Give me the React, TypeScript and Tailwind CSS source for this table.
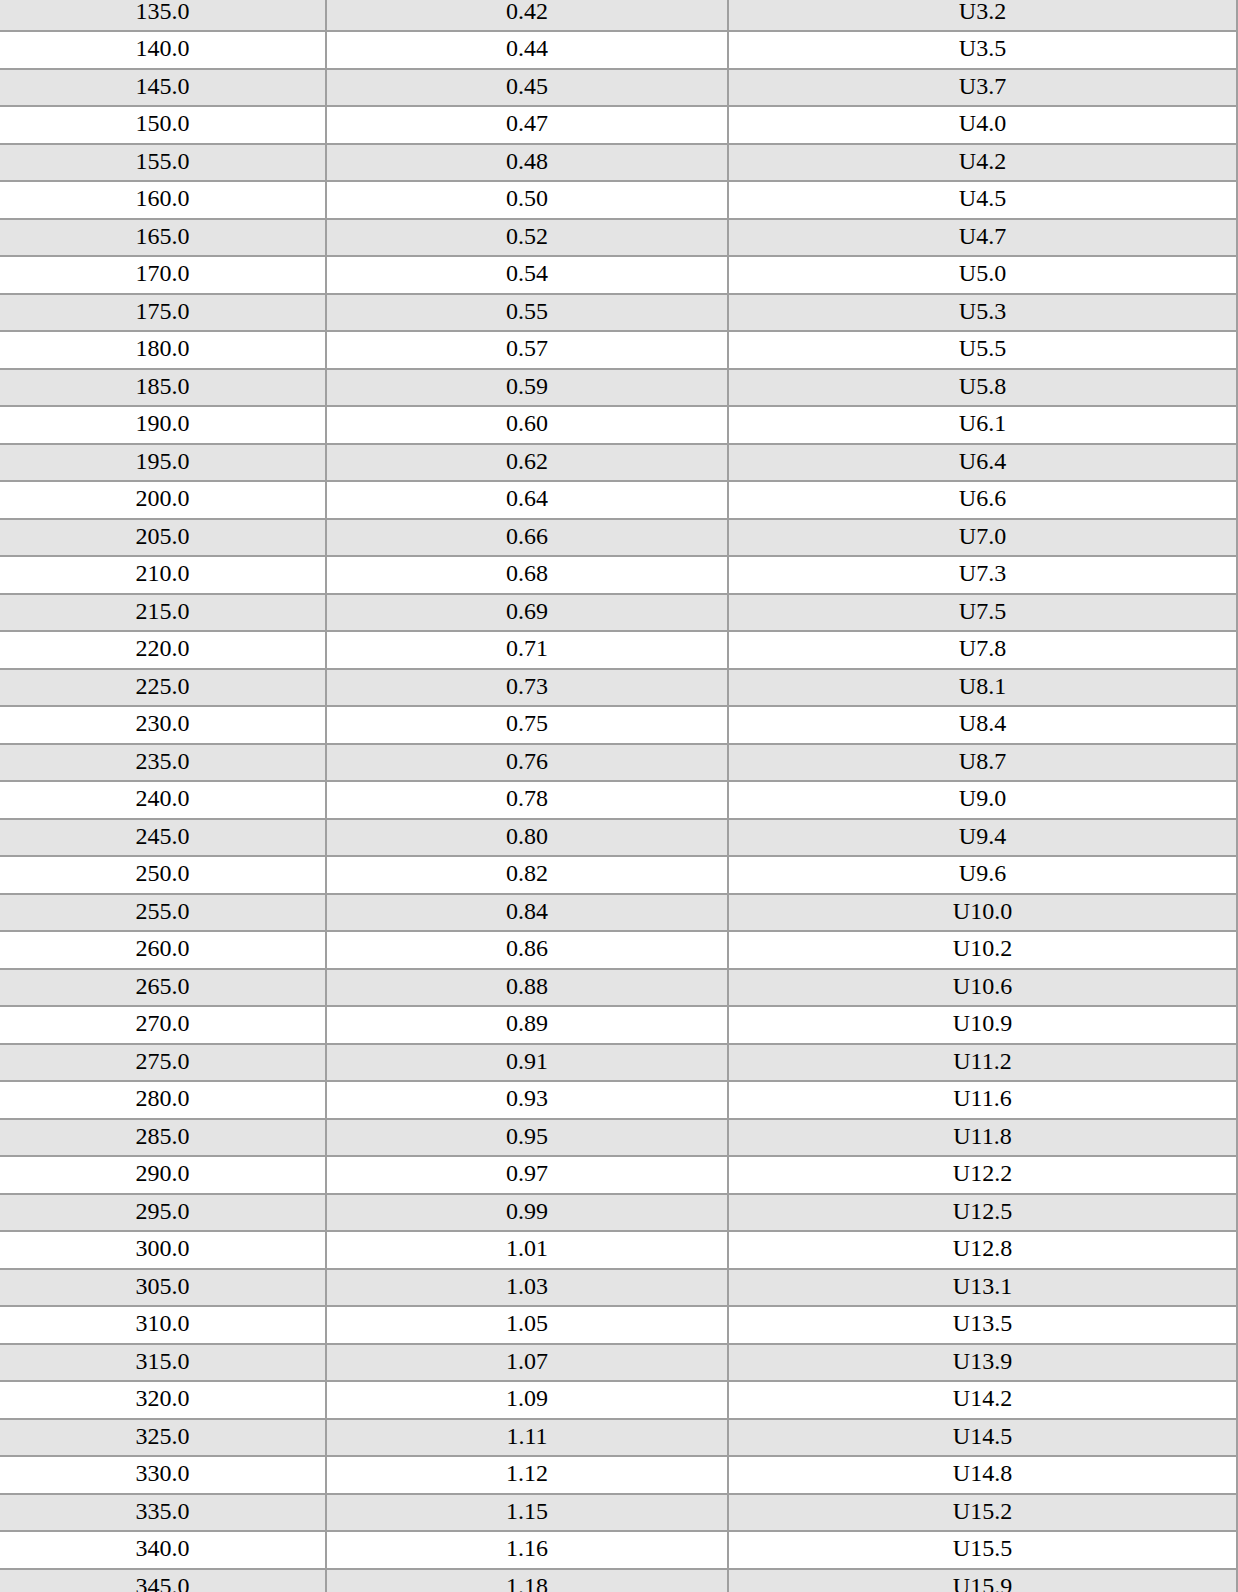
const volts = [
  "0.42", "0.44", "0.45", "0.47", "0.48", "0.50", "0.52", "0.54", "0.55", "0.57",
  "0.59", "0.60", "0.62", "0.64", "0.66", "0.68", "0.69", "0.71", "0.73", "0.75",
  "0.76", "0.78", "0.80", "0.82", "0.84", "0.86", "0.88", "0.89", "0.91", "0.93",
  "0.95", "0.97", "0.99", "1.01", "1.03", "1.05", "1.07", "1.09", "1.11", "1.12",
  "1.15", "1.16", "1.18",
];

const codes = [
  "U3.2", "U3.5", "U3.7", "U4.0", "U4.2", "U4.5", "U4.7", "U5.0", "U5.3", "U5.5",
  "U5.8", "U6.1", "U6.4", "U6.6", "U7.0", "U7.3", "U7.5", "U7.8", "U8.1", "U8.4",
  "U8.7", "U9.0", "U9.4", "U9.6", "U10.0", "U10.2", "U10.6", "U10.9", "U11.2", "U11.6",
  "U11.8", "U12.2", "U12.5", "U12.8", "U13.1", "U13.5", "U13.9", "U14.2", "U14.5", "U14.8",
  "U15.2", "U15.5", "U15.9",
];

const rows = volts.map((v, i) => ({
  value: (135 + i * 5).toFixed(1),
  volt: v,
  code: codes[i],
}));

export default function App() {
  return (
    <div className="w-[1238px] h-[1592px] overflow-hidden bg-white font-['Liberation_Serif',serif] text-[24px] leading-none text-black">
      <div className="mt-[-5.5px]">
        {rows.map((row, i) => (
          <div
            key={row.value}
            className={
              "grid grid-cols-[327px_402px_509px] h-[37.5px] border-b-2 border-[#9f9f9f] " +
              (i % 2 === 0 ? "bg-[#e4e4e4]" : "bg-white")
            }
          >
            <div className="flex items-center justify-center border-r-2 border-[#9f9f9f] pb-[3px]">
              {row.value}
            </div>
            <div className="flex items-center justify-center border-r-2 border-[#9f9f9f] pb-[3px]">
              {row.volt}
            </div>
            <div className="flex items-center justify-center border-r-2 border-[#9f9f9f] pb-[3px]">
              {row.code}
            </div>
          </div>
        ))}
      </div>
    </div>
  );
}
